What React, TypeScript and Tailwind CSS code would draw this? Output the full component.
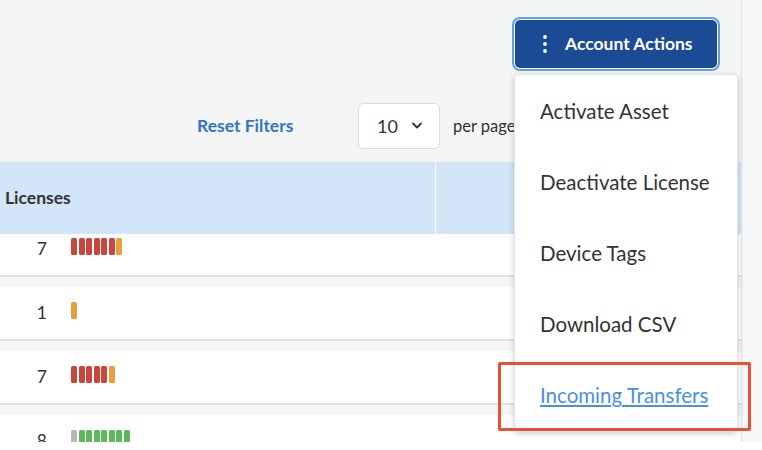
import React from "react";

const RED = "bg-[#c9463d]";
const ORANGE = "bg-[#eaa03a]";
const GREEN = "bg-[#5cb85c]";
const GRAY = "bg-[#b8b8b8]";

function Bars({ colors }: { colors: string[] }) {
  return (
    <div className="flex gap-[1.5px] mb-[5px] ml-[24px]">
      {colors.map((c, i) => (
        <div key={i} className={`w-[6px] h-[17px] rounded-[1.5px] ${c}`} />
      ))}
    </div>
  );
}

function Row({ n, colors, className = "" }: { n: string; colors: string[]; className?: string }) {
  return (
    <div className={`h-[54px] bg-white border-b-2 border-[#e1e2e2] mb-[10px] flex items-center shrink-0 ${className}`}>
      <div className="w-[47px] text-right text-[17.5px] text-[#333]">{n}</div>
      <Bars colors={colors} />
    </div>
  );
}

export default function App() {
  const items = ["Activate Asset", "Deactivate License", "Device Tags", "Download CSV"];
  return (
    <div
      className="relative w-[762px] h-[450px] bg-white overflow-hidden"
      style={{ fontFamily: "Lato, 'Noto Sans', sans-serif" }}
    >
      <div className="flex h-[442px]">
        <div className="w-[741px] bg-[#f4f5f5] flex flex-col overflow-hidden">
          {/* Top area */}
          <div className="h-[162px] shrink-0 flex flex-col">
            <div className="flex justify-end pt-[20px] pr-[24px]">
              <button className="w-[202px] h-[48px] bg-[#1b4b95] rounded-[5px] ring-2 ring-[#5b9ee9] ring-offset-1 flex items-center pl-[27px] text-white text-[17.5px] font-bold whitespace-nowrap">
                <svg width="6" height="18" viewBox="0 0 6 18" className="mr-[17px] shrink-0">
                  <circle cx="3" cy="2" r="1.9" fill="white" />
                  <circle cx="3" cy="9" r="1.9" fill="white" />
                  <circle cx="3" cy="16" r="1.9" fill="white" />
                </svg>
                Account Actions
              </button>
            </div>
            <div className="flex items-center pl-[197px] mt-[35px] h-[46px]">
              <span className="w-[161px] shrink-0 text-[17.5px] font-bold text-[#3574c4]">Reset Filters</span>
              <div className="w-[82px] h-[46px] shrink-0 bg-white border border-[#dcdcdc] rounded-[5px] flex items-center pl-[18px] text-[18px] text-[#333]">
                10
                <svg width="12" height="8" viewBox="0 0 12 8" className="ml-[13px]">
                  <polyline points="2,1.5 6,5.5 10,1.5" fill="none" stroke="#333" strokeWidth="1.8" strokeLinecap="round" strokeLinejoin="round" />
                </svg>
              </div>
              <span className="ml-[13px] text-[16.5px] text-[#333] whitespace-nowrap">per page</span>
            </div>
          </div>
          {/* Header */}
          <div className="h-[72px] shrink-0 bg-[#d2e6f8] border-t border-[#dfe3e6] flex">
            <div className="w-[436px] border-r border-white flex items-center pl-[5px] text-[17.5px] font-bold text-[#333]">
              Licenses
            </div>
            <div className="flex-1" />
          </div>
          {/* Rows */}
          <div className="flex-1 overflow-hidden flex flex-col">
            <Row n="7" colors={[RED, RED, RED, RED, RED, RED, ORANGE]} className="-mt-[11px]" />
            <Row n="1" colors={[ORANGE]} />
            <Row n="7" colors={[RED, RED, RED, RED, RED, ORANGE]} />
            <Row n="8" colors={[GRAY, GREEN, GREEN, GREEN, GREEN, GREEN, GREEN, GREEN]} />
          </div>
        </div>
        <div className="w-[21px] border-l border-[#e2e3e3] bg-[#f5f6f6]" />
      </div>

      {/* Dropdown menu */}
      <div className="absolute left-[514px] top-[74px] w-[224px] h-[358px] bg-white border border-[#e3e3e3] rounded-[4px] shadow-[0_2px_6px_rgba(0,0,0,0.18)] pt-px">
        {items.map((t) => (
          <div key={t} className="h-[71px] flex items-center pl-[25px] text-[20.5px] text-[#333] whitespace-nowrap">
            {t}
          </div>
        ))}
        <div className="h-[71px] flex items-center pl-[25px] text-[20.5px] text-[#4a90e2] underline underline-offset-2 whitespace-nowrap">
          Incoming Transfers
        </div>
      </div>

      {/* Annotation box */}
      <div className="absolute left-[498px] top-[362px] w-[253px] h-[69px] border-[3px] border-[#e9503a] rounded-[2px]" />
    </div>
  );
}
